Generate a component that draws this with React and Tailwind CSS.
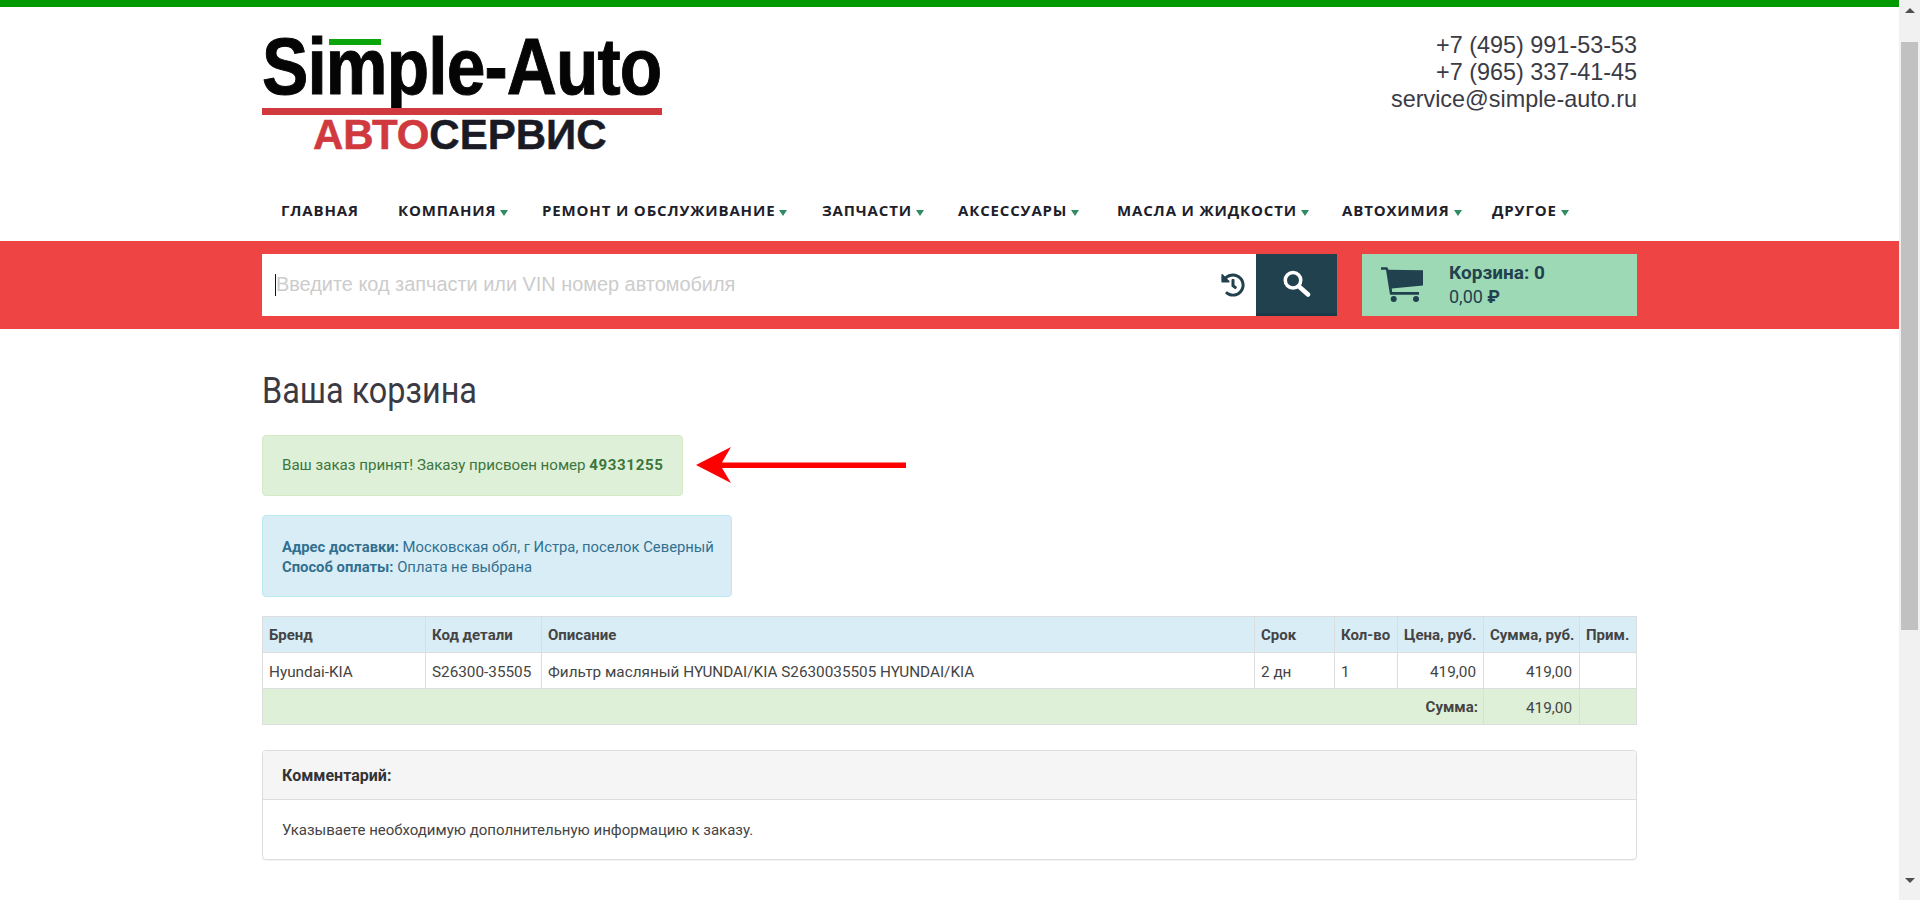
import { FaHistory } from "react-icons/fa"

const navItems = [
    { title: 'ГЛАВНАЯ', cls: 'w-[117px]' },
    { title: 'КОМПАНИЯ', arrow: true, cls: 'w-[144px]' },
    { title: 'РЕМОНТ И ОБСЛУЖИВАНИЕ', arrow: true, cls: 'w-[280px]' },
    { title: 'ЗАПЧАСТИ', arrow: true, cls: 'w-[136px]' },
    { title: 'АКСЕССУАРЫ', arrow: true, cls: 'w-[159px]' },
    { title: 'МАСЛА И ЖИДКОСТИ', arrow: true, cls: 'w-[225px]' },
    { title: 'АВТОХИМИЯ', arrow: true, cls: 'w-[150px]' },
    { title: 'ДРУГОЕ', arrow: true, cls: 'w-[100px]' },
]

const tdCls = "border border-[#ddd] pl-[6px] pr-[7px] pt-[3px] text-[15.300px]"

function Logo() {
    return (
        <div className="relative w-[400px] h-[150px] font-['Liberation_Sans',sans-serif] font-bold">
            <div className="h-[101px]">
                <div className="text-[80px] leading-[80px] pt-[20px] text-[#050505] tracking-[-1px] [-webkit-text-stroke:1px_#050505] origin-top-left scale-x-[.868] whitespace-nowrap">Simple-Auto</div>
            </div>
            <div className="absolute left-[67px] top-[32px] w-[52px] h-[6px] bg-[#0aa50a] border-b-[2px] border-white box-content"></div>
            <div className="relative h-[7px] bg-[#d03a3e]"></div>
            <div className="pl-[51px] pt-[2px] text-[42px] leading-[36px] [-webkit-text-stroke:0.500px_#1a1a24] whitespace-nowrap text-[#1a1a24]">
                <span className="text-[#d03a3e] [-webkit-text-stroke:0.500px_#d03a3e]">АВТО</span>СЕРВИС
            </div>
        </div>
    )
}

function CartIcon() {
    return (
        <svg viewBox="0 0 42 36" className="w-[42px] h-[36px] fill-[#21414f]">
            <path d="M0 .3h5.500c.8 0 1.300.4 1.500 1.200L7.400 2.700 42 3.200V18.500L10.700 21.500l.5 3.500H38v2.800H9L5 2.700H0z" />
            <circle cx="12.700" cy="32" r="3" />
            <circle cx="35" cy="32" r="3" />
        </svg>
    )
}

function SearchIcon() {
    return (
        <svg viewBox="0 0 28 28" className="w-[28px] h-[28px]">
            <circle cx="10" cy="10.300" r="7.750" fill="none" stroke="#fff" strokeWidth="3.500" />
            <path d="M16 16.500L25 24.500" stroke="#fff" strokeWidth="4.500" strokeLinecap="round" />
        </svg>
    )
}

function RedArrow() {
    return (
        <svg viewBox="0 0 210 36" className="w-[210px] h-[36px] mb-[2px] fill-[#ff0000]">
            <path d="M0 18L35 0L26 15.500H210V21H26L35 36z" />
        </svg>
    )
}

export default function App() {
    return (
        <div className="flex h-[900px] overflow-hidden bg-white text-[#444] font-['Roboto',sans-serif] text-[15px]">
            <div className="w-[1899px]">
                <div className="h-[7px] bg-[#009900]"></div>

                <div className="ml-[262px] w-[1375px] flex justify-between h-[182px]">
                    <Logo />
                    <div className="pt-[25px] text-right font-['Liberation_Sans',sans-serif] text-[23.400px] leading-[27px] text-[#3b3b46]">
                        <div>+7 (495) 991-53-53</div>
                        <div>+7 (965) 337-41-45</div>
                        <div>service@simple-auto.ru</div>
                    </div>
                </div>

                <nav className="ml-[262px] flex h-[52px] pl-[19px] items-start pt-[11px] font-['Open_Sans',sans-serif] font-bold text-[15px] tracking-[.85px] leading-[20px] text-[#20202a]">
                    {navItems.map((item) => (
                        <a key={item.title} className={`${item.cls} whitespace-nowrap flex items-center gap-[4px]`}>
                            {item.title}
                            {item.arrow && <span className="mt-[5px] w-0 h-0 border-x-[4px] border-x-transparent border-t-[6px] border-t-[#2e8b62]"></span>}
                        </a>
                    ))}
                </nav>

                <div className="h-[88px] bg-[#ef4444] pl-[262px] pt-[13px] flex">
                    <div className="w-[994px] h-[62px] bg-white flex items-center pl-[13px] pr-[11px]">
                        <div className="w-px h-[22px] bg-[#111]"></div>
                        <div className="flex-1 pb-[1px] font-['Liberation_Sans',sans-serif] text-[19.900px] text-[#cccccc] whitespace-nowrap">Введите код запчасти или VIN номер автомобиля</div>
                        <FaHistory className="text-[24px] text-[#21414f]" />
                    </div>
                    <button className="w-[81px] h-[62px] bg-[#21414f] border-b-[3px] border-[#1c3947] flex items-center justify-center"><SearchIcon /></button>
                    <div className="ml-[25px] w-[275px] h-[62px] bg-[#9ed9b5] flex items-center pl-[19px] text-[#21414f]">
                        <CartIcon />
                        <div className="ml-[26px] text-[18px] leading-[24px]">
                            <div className="font-bold text-[19px] -mt-[1px]">Корзина: 0</div>
                            <div>0,00 <b>₽</b></div>
                        </div>
                    </div>
                </div>

                <div className="ml-[262px] w-[1375px]">
                    <h1 className="mt-[40px] text-[36px] leading-[44px] text-[#3a3a44] origin-left scale-x-[.9]">Ваша корзина</h1>

                    <div className="mt-[22px] flex items-center gap-[13px]">
                        <div className="w-[421px] h-[61px] rounded-[4px] border border-[#d6e9c6] bg-[#dff0d8] text-[#3c763d] text-[15.100px] flex items-center pl-[19px]">
                            <span>Ваш заказ принят! Заказу присвоен номер <b className="tracking-[.6px]">49331255</b></span>
                        </div>
                        <RedArrow />
                    </div>

                    <div className="mt-[19px] w-[470px] h-[82px] rounded-[4px] border border-[#bce8f1] bg-[#d9edf7] text-[#31708f] text-[14.800px] pl-[19px] pt-[21px] leading-[20px]">
                        <div><b>Адрес доставки:</b> Московская обл, г Истра, поселок Северный</div>
                        <div><b>Способ оплаты:</b> Оплата не выбрана</div>
                    </div>

                    <table className="mt-[19px] w-[1374px] table-fixed border-collapse">
                        <colgroup>
                            <col className="w-[163px]" />
                            <col className="w-[116px]" />
                            <col className="w-[713px]" />
                            <col className="w-[80px]" />
                            <col className="w-[63px]" />
                            <col className="w-[86px]" />
                            <col className="w-[96px]" />
                            <col className="w-[57px]" />
                        </colgroup>
                        <thead>
                            <tr className="h-[36px] bg-[#d9edf7] text-left">
                                {['Бренд', 'Код детали', 'Описание', 'Срок', 'Кол-во', 'Цена, руб.', 'Сумма, руб.', 'Прим.'].map((title) => (
                                    <th key={title} className="border border-[#ddd] pl-[6px] pr-[4px] pt-[1px] font-bold whitespace-nowrap">{title}</th>
                                ))}
                            </tr>
                        </thead>
                        <tbody>
                            <tr className="h-[36px]">
                                <td className={tdCls}>Hyundai-KIA</td>
                                <td className={tdCls}>S26300-35505</td>
                                <td className={tdCls}>Фильтр масляный HYUNDAI/KIA S2630035505 HYUNDAI/KIA</td>
                                <td className={tdCls}>2 дн</td>
                                <td className={tdCls}>1</td>
                                <td className={`${tdCls} text-right`}>419,00</td>
                                <td className={`${tdCls} text-right`}>419,00</td>
                                <td className={tdCls}></td>
                            </tr>
                            <tr className="h-[36px] bg-[#dff0d8]">
                                <td colSpan={6} className="border border-[#ddd] px-[5px] pt-[2px] text-right font-bold">Сумма:</td>
                                <td className={`${tdCls} text-right`}>419,00</td>
                                <td className={tdCls}></td>
                            </tr>
                        </tbody>
                    </table>

                    <div className="mt-[25px] rounded-[4px] border border-[#ddd] shadow-[0_1px_1px_rgba(0,0,0,0.05)]">
                        <div className="h-[49px] bg-[#f5f5f5] border-b border-[#ddd] rounded-t-[4px] flex items-center pl-[19px] pt-[2px] text-[16px] font-bold text-[#333]">Комментарий:</div>
                        <div className="h-[59px] flex items-center pl-[19px] pt-[2px]">Указываете необходимую дополнительную информацию к заказу.</div>
                    </div>
                </div>
            </div>

            <div className="w-[21px] bg-[#f1f1f1] flex flex-col items-center">
                <div className="mt-[8px] w-0 h-0 border-x-[5px] border-x-transparent border-b-[5px] border-b-[#505050]"></div>
                <div className="mt-[29px] w-[17px] h-[588px] bg-[#c1c1c1]"></div>
                <div className="mt-[248px] w-0 h-0 border-x-[5px] border-x-transparent border-t-[5px] border-t-[#505050]"></div>
            </div>
        </div>
    )
}
